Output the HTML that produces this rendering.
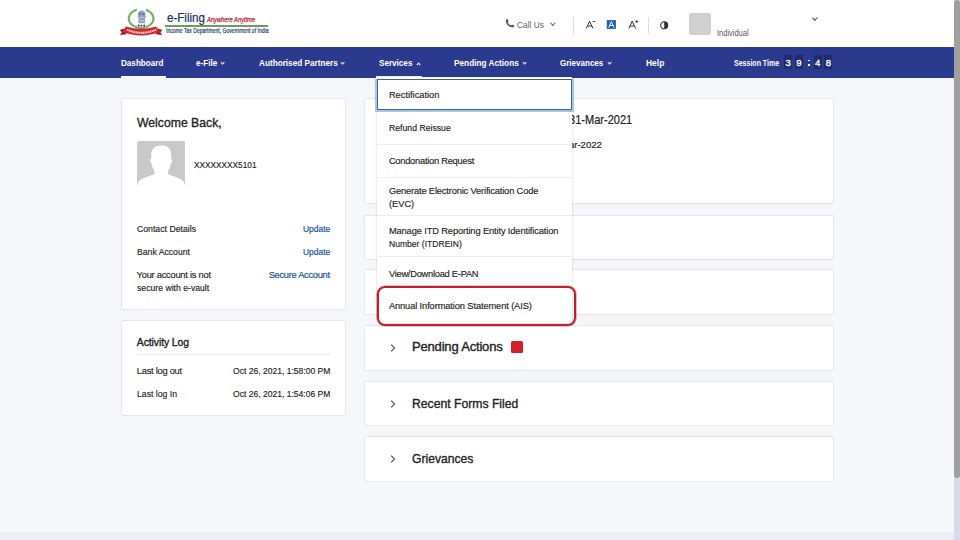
<!DOCTYPE html>
<html><head><meta charset="utf-8">
<style>
*{margin:0;padding:0;box-sizing:border-box}
html,body{width:960px;height:540px;overflow:hidden;background:#f4f6fa;font-family:"Liberation Sans",sans-serif;color:#222}
.abs{position:absolute}
.t{position:absolute;white-space:nowrap;line-height:1;transform-origin:0 0}
#hdr{position:absolute;left:0;top:0;width:954px;height:46.5px;background:#fff}
#nav{position:absolute;left:0;top:46.5px;width:954px;height:31px;background:#2a3b8f}
.chev{position:absolute;width:3.2px;height:3.2px;border-right:1px solid #fff;border-bottom:1px solid #fff;transform:rotate(45deg)}
.rchev{position:absolute;width:4.4px;height:4.4px;border-right:1.1px solid #555;border-bottom:1.1px solid #555;transform:rotate(-45deg)}
.card{position:absolute;background:#fff;border:1px solid #e6e7ee;border-radius:2px}
.dd{position:absolute;left:376.5px;top:77px;width:195.5px;height:246px;background:#fff;box-shadow:0 0 2px rgba(0,0,0,.2)}
.sep{position:absolute;left:376.5px;width:195.5px;height:1px;background:#eceef3}
.digit{position:absolute;top:55px;height:14px;background:#1f2c6e}
</style></head><body>
<div id="hdr"></div>
<!-- logo -->
<svg class="abs" style="left:118px;top:4px" width="50" height="36" viewBox="0 0 50 36">
  <ellipse cx="23.1" cy="14.45" rx="12.4" ry="9.4" fill="none" stroke="#7dbe7b" stroke-width="2.2"/>
  <ellipse cx="23.1" cy="14.45" rx="12.4" ry="9.4" fill="none" stroke="#46994d" stroke-width="0.9" stroke-dasharray="1.4 1.3"/>
  <rect x="18.8" y="3" width="9" height="4.5" fill="#fff"/>
  <path d="M20 10 C20 7.2 21.8 6.5 23.7 6.5 C25.6 6.5 27.5 7.2 27.5 10 L27.7 13.5 L26.8 14.2 L27.2 19.3 L20.2 19.3 L20.6 14.2 L19.7 13.5 Z" fill="#93a2c3"/>
  <circle cx="22.2" cy="10" r="1.1" fill="#63759f"/><circle cx="25.4" cy="10.2" r="1.1" fill="#63759f"/>
  <path d="M21.2 13.3 h5 M21.6 16.8 h4.2" stroke="#c3cce0" stroke-width="0.9"/>
  <path d="M20 21.5 h7.4" stroke="#2a2a2a" stroke-width="1.3" stroke-dasharray="1.7 1"/>
  <path d="M6 24.5 L1.8 26 L3.8 28.3 L2 30.9 L8.5 30.2 Z M40.2 24.5 L44.4 26 L42.4 28.3 L44.2 30.9 L37.7 30.2 Z" fill="#9e1b27"/>
  <path d="M8 22.4 Q23.1 27.2 38.2 22.4 L41.8 27.8 Q23.1 35.4 4.4 27.8 Z" fill="#d6232f"/>
  <path d="M9 25.6 Q23.4 32 38.3 25.6" fill="none" stroke="#fbe3e5" stroke-width="2" stroke-dasharray="1.3 0.5"/>
</svg>
<div class="abs" style="left:165.2px;top:25.2px;width:103.3px;height:1.8px;background:#6b9e5f"></div>

<!-- header right -->
<svg class="abs" style="left:505px;top:19px" width="10" height="9" viewBox="0 0 10 9"><path d="M1.2 0.6 L2.8 0.3 L3.6 2.4 L2.6 3.2 Q3.8 5.6 6.2 6.6 L7 5.6 L9.2 6.4 L9 8.2 Q4.8 8.6 2.2 5.6 Q0.4 3.4 1.2 0.6z" fill="#555"/></svg>
<div class="abs" style="left:550.8px;top:20.8px;width:3.6px;height:3.6px;border-right:1px solid #666;border-bottom:1px solid #666;transform:rotate(45deg)"></div>
<div class="abs" style="left:573.3px;top:17px;width:1px;height:17.5px;background:#dedede"></div>
<svg class="abs" style="left:585px;top:19px" width="60" height="12" viewBox="0 0 60 12">
  <path d="M1.2 9.5 L4.6 2.2 L8 9.5 M2.4 7 L6.8 7" fill="none" stroke="#333" stroke-width="1"/>
  <path d="M7.8 2.5 h2.4" stroke="#333" stroke-width="0.9"/>
  <rect x="21.8" y="1.1" width="9.1" height="8.8" fill="#1b60b6"/>
  <path d="M23.6 8.6 L26.35 2.6 L29.1 8.6 M24.6 6.5 L28.1 6.5" fill="none" stroke="#fff" stroke-width="0.95"/>
  <path d="M43.8 9.5 L47.2 2.2 L50.6 9.5 M45 7 L49.4 7" fill="none" stroke="#333" stroke-width="1"/>
  <path d="M50.3 2.6 h3 M51.8 1.1 v3" stroke="#333" stroke-width="0.9"/>
</svg>
<div class="abs" style="left:648.3px;top:17.2px;width:1px;height:17.2px;background:#dedede"></div>
<svg class="abs" style="left:659.5px;top:20.5px" width="9" height="9" viewBox="0 0 9 9"><circle cx="4.2" cy="4.3" r="3.5" fill="none" stroke="#333" stroke-width="1.1"/><path d="M4.2 0.8 A3.5 3.5 0 0 1 4.2 7.8z" fill="#333"/></svg>
<div class="abs" style="left:688.7px;top:12.5px;width:22.2px;height:22.2px;background:#d0d0d0;border-radius:2px"></div>
<div class="abs" style="left:813px;top:15.6px;width:3.8px;height:3.8px;border-right:1px solid #444;border-bottom:1px solid #444;transform:rotate(45deg)"></div>

<!-- nav -->
<div id="nav"></div>
<div class="abs" style="left:121px;top:75.5px;width:44.5px;height:2px;background:#f8f9fc"></div>
<div class="chev" style="left:221.2px;top:60.8px"></div>
<div class="chev" style="left:341.2px;top:60.8px"></div>
<div class="chev" style="left:417.2px;top:62.8px;transform:rotate(225deg)"></div>
<div class="abs" style="left:376px;top:75.5px;width:46px;height:2px;background:#f8f9fc"></div>
<div class="chev" style="left:522.8px;top:60.8px"></div>
<div class="chev" style="left:607.8px;top:60.8px"></div>
<div class="digit" style="left:784.4px;width:7.6px"></div>
<div class="digit" style="left:795px;width:8.1px"></div>
<div class="digit" style="left:813.7px;width:8.2px"></div>
<div class="digit" style="left:824.4px;width:8.1px"></div>
<div class="abs" style="left:808px;top:59.5px;width:1.6px;height:1.6px;background:#fff"></div>
<div class="abs" style="left:808px;top:64px;width:1.6px;height:1.6px;background:#fff"></div>

<!-- cards -->
<div class="card" style="left:121px;top:98px;width:225px;height:212px"></div>
<svg class="abs" style="left:136.7px;top:140.7px" width="48.2" height="47.2" viewBox="0 0 48.2 47.2">
  <rect width="48.2" height="47.2" rx="2" fill="#c9c9c9"/>
  <path d="M24.6 4.6 C30.8 4.6 34.2 8 34.2 13.5 L34.2 17.5 C35.4 17.8 35.4 21.5 33.9 22.5 C33.1 26 32.1 28.5 31.1 29.5 L31.1 33 C36 35.5 44 37 46.5 40.5 C47.6 42 48.2 44.5 48.2 47.2 L0 47.2 C0 44.5 0.6 42 1.7 40.5 C4.2 37 12.2 35.5 17.3 33 L17.3 29.5 C16.3 28.5 15.3 26 14.5 22.5 C13 21.5 13 17.8 14.3 17.5 L14.3 13.5 C14.3 8 17.8 4.6 24.6 4.6 Z" fill="#fff"/>
</svg>
<div class="card" style="left:121px;top:320px;width:225px;height:96px"></div>
<div class="abs" style="left:136.8px;top:354px;width:193.5px;height:1px;background:#e6e7ec"></div>

<div class="card" style="left:364px;top:98px;width:470px;height:106px"></div>
<div class="card" style="left:364px;top:214.5px;width:470px;height:45.5px"></div>
<div class="card" style="left:364px;top:269.2px;width:470px;height:45.5px"></div>
<div class="card" style="left:364px;top:325.3px;width:470px;height:45.5px"></div>
<div class="card" style="left:364px;top:381.2px;width:470px;height:45.3px"></div>
<div class="card" style="left:364px;top:436.4px;width:470px;height:45.6px"></div>

<div class="abs" style="left:510.5px;top:340.5px;width:12.5px;height:12px;background:#d3202b;border-radius:1.5px"></div>



<svg class="abs" style="left:389px;top:342.6px" width="8" height="10" viewBox="0 0 8 10"><path d="M2.1 1.6 L5.6 5 L2.1 8.4" fill="none" stroke="#555" stroke-width="1.15"/></svg>
<svg class="abs" style="left:389px;top:398.6px" width="8" height="10" viewBox="0 0 8 10"><path d="M2.1 1.6 L5.6 5 L2.1 8.4" fill="none" stroke="#555" stroke-width="1.15"/></svg>
<svg class="abs" style="left:389px;top:453.6px" width="8" height="10" viewBox="0 0 8 10"><path d="M2.1 1.6 L5.6 5 L2.1 8.4" fill="none" stroke="#555" stroke-width="1.15"/></svg>
<div class="t" style="left:166.80px;top:11px;font-size:13.2px;color:#14305f;transform:scaleX(0.8780);-webkit-text-stroke:0.2px #14305f">e-Filing</div>
<div class="t" style="left:207.20px;top:16px;font-size:7.4px;color:#b5202f;font-style:italic;transform:scaleX(0.7815);-webkit-text-stroke:0.25px #b5202f">Anywhere Anytime</div>
<div class="t" style="left:165.50px;top:28px;font-size:6.5px;color:#284568;transform:scaleX(0.7801);-webkit-text-stroke:0.2px #284568">Income Tax Department, Government of India</div>
<div class="t" style="left:517.00px;top:20px;font-size:9.8px;color:#666;transform:scaleX(0.8549)">Call Us</div>
<div class="t" style="left:716.70px;top:29px;font-size:8.6px;color:#555;transform:scaleX(0.8697)">Individual</div>
<div class="t" style="left:120.80px;top:58px;font-size:9.8px;color:#fff;font-weight:bold;transform:scaleX(0.8283)">Dashboard</div>
<div class="t" style="left:195.60px;top:58px;font-size:9.8px;color:#fff;font-weight:bold;transform:scaleX(0.8322)">e-File</div>
<div class="t" style="left:259.00px;top:58px;font-size:9.8px;color:#fff;font-weight:bold;transform:scaleX(0.8354)">Authorised Partners</div>
<div class="t" style="left:379.30px;top:58px;font-size:9.8px;color:#fff;font-weight:bold;transform:scaleX(0.8283)">Services</div>
<div class="t" style="left:454.00px;top:58px;font-size:9.8px;color:#fff;font-weight:bold;transform:scaleX(0.8421)">Pending Actions</div>
<div class="t" style="left:560.40px;top:58px;font-size:9.8px;color:#fff;font-weight:bold;transform:scaleX(0.8193)">Grievances</div>
<div class="t" style="left:645.70px;top:58px;font-size:9.8px;color:#fff;font-weight:bold;transform:scaleX(0.8617)">Help</div>
<div class="t" style="left:733.50px;top:60px;font-size:8.2px;color:#fff;font-weight:bold;transform:scaleX(0.8574)">Session Time</div>
<div class="t" style="left:785.40px;top:58px;font-size:9.5px;color:#fff;-webkit-text-stroke:0.35px #fff">3</div>
<div class="t" style="left:796.30px;top:58px;font-size:9.5px;color:#fff;-webkit-text-stroke:0.35px #fff">9</div>
<div class="t" style="left:815.10px;top:58px;font-size:9.5px;color:#fff;-webkit-text-stroke:0.35px #fff">4</div>
<div class="t" style="left:825.70px;top:58px;font-size:9.5px;color:#fff;-webkit-text-stroke:0.35px #fff">8</div>
<div class="t" style="left:137.00px;top:116px;font-size:13.3px;color:#222;transform:scaleX(0.9192);-webkit-text-stroke:0.35px #222">Welcome Back,</div>
<div class="t" style="left:194.10px;top:160px;font-size:9.7px;color:#222;transform:scaleX(0.8536);-webkit-text-stroke:0.15px #222">XXXXXXXX5101</div>
<div class="t" style="left:136.60px;top:225px;font-size:9.3px;color:#222;transform:scaleX(0.9356);-webkit-text-stroke:0.15px #222">Contact Details</div>
<div class="t" style="left:136.60px;top:248px;font-size:9.3px;color:#222;transform:scaleX(0.9319);-webkit-text-stroke:0.15px #222">Bank Account</div>
<div class="t" style="left:136.60px;top:271px;font-size:9.3px;color:#222;letter-spacing:-0.242px;-webkit-text-stroke:0.15px #222">Your account is not</div>
<div class="t" style="left:136.60px;top:284px;font-size:9.3px;color:#222;transform:scaleX(0.9312);-webkit-text-stroke:0.15px #222">secure with e-vault</div>
<div class="t" style="left:302.70px;top:225px;font-size:9.3px;color:#1b5299;transform:scaleX(0.9103);-webkit-text-stroke:0.2px #1b5299">Update</div>
<div class="t" style="left:302.70px;top:248px;font-size:9.3px;color:#1b5299;transform:scaleX(0.9103);-webkit-text-stroke:0.2px #1b5299">Update</div>
<div class="t" style="left:268.70px;top:271px;font-size:9.3px;color:#1b5299;letter-spacing:-0.295px;-webkit-text-stroke:0.2px #1b5299">Secure Account</div>
<div class="t" style="left:136.80px;top:338px;font-size:10.4px;color:#222;letter-spacing:-0.080px;-webkit-text-stroke:0.35px #222">Activity Log</div>
<div class="t" style="left:136.80px;top:367px;font-size:9.3px;color:#222;letter-spacing:-0.253px;-webkit-text-stroke:0.15px #222">Last log out</div>
<div class="t" style="left:233.20px;top:367px;font-size:9.3px;color:#222;transform:scaleX(0.9190);-webkit-text-stroke:0.15px #222">Oct 26, 2021, 1:58:00 PM</div>
<div class="t" style="left:136.80px;top:390px;font-size:9.3px;color:#222;transform:scaleX(0.9344);-webkit-text-stroke:0.15px #222">Last log In</div>
<div class="t" style="left:233.20px;top:390px;font-size:9.3px;color:#222;transform:scaleX(0.9190);-webkit-text-stroke:0.15px #222">Oct 26, 2021, 1:54:06 PM</div>
<div class="t" style="left:569.30px;top:114px;font-size:12.2px;color:#222;transform:scaleX(0.9060);-webkit-text-stroke:0.2px #222">31-Mar-2021</div>
<div class="t" style="left:568.90px;top:140px;font-size:9.6px;color:#222;-webkit-text-stroke:0.15px #222">ar-2022</div>
<div class="t" style="left:412.00px;top:340px;font-size:13.0px;color:#222;letter-spacing:-0.181px;-webkit-text-stroke:0.35px #222">Pending Actions</div>
<div class="t" style="left:412.00px;top:397px;font-size:13.0px;color:#222;transform:scaleX(0.9372);-webkit-text-stroke:0.35px #222">Recent Forms Filed</div>
<div class="t" style="left:412.00px;top:452px;font-size:13.0px;color:#222;transform:scaleX(0.9323);-webkit-text-stroke:0.35px #222">Grievances</div>

<!-- dropdown -->
<div class="dd"></div>
<div class="sep" style="top:144.0px"></div>
<div class="sep" style="top:176.6px"></div>
<div class="sep" style="top:215.4px"></div>
<div class="sep" style="top:256.1px"></div>
<div class="abs" style="left:375.4px;top:79px;width:198.2px;height:32.8px;background:#a9c5e4"></div>
<div class="abs" style="left:377px;top:78.5px;width:195px;height:31.7px;background:#fff;border:1.2px solid #41639a"></div>
<div class="t" style="left:388.90px;top:91px;font-size:9.3px;color:#222;letter-spacing:-0.013px;-webkit-text-stroke:0.15px #222">Rectification</div>
<div class="t" style="left:388.90px;top:124px;font-size:9.3px;color:#222;transform:scaleX(0.9339);-webkit-text-stroke:0.15px #222">Refund Reissue</div>
<div class="t" style="left:388.90px;top:157px;font-size:9.3px;color:#222;letter-spacing:-0.248px;-webkit-text-stroke:0.15px #222">Condonation Request</div>
<div class="t" style="left:388.90px;top:187px;font-size:9.3px;color:#222;letter-spacing:-0.155px;-webkit-text-stroke:0.15px #222">Generate Electronic Verification Code</div>
<div class="t" style="left:388.90px;top:200px;font-size:9.3px;color:#222;-webkit-text-stroke:0.15px #222">(EVC)</div>
<div class="t" style="left:388.90px;top:227px;font-size:9.3px;color:#222;letter-spacing:-0.125px;-webkit-text-stroke:0.15px #222">Manage ITD Reporting Entity Identification</div>
<div class="t" style="left:388.90px;top:240px;font-size:9.3px;color:#222;transform:scaleX(0.9209);-webkit-text-stroke:0.15px #222">Number (ITDREIN)</div>
<div class="t" style="left:388.90px;top:270px;font-size:9.3px;color:#222;letter-spacing:-0.253px;-webkit-text-stroke:0.15px #222">View/Download E-PAN</div>
<div class="t" style="left:388.90px;top:302px;font-size:9.3px;color:#222;letter-spacing:-0.115px;-webkit-text-stroke:0.15px #222">Annual Information Statement (AIS)</div>
<div class="abs" style="left:377px;top:286.2px;width:198.8px;height:40.2px;border:2px solid #bf1e2c;border-radius:8px;box-shadow:0 0 0 0.6px rgba(191,30,44,.55)"></div>

<!-- footer band & scrollbar -->
<div class="abs" style="left:0;top:531.8px;width:954px;height:9px;background:#ecedf5"></div>
<div class="abs" style="left:954px;top:0;width:6px;height:540px;background:#d9dae9"></div>
<div class="abs" style="left:954px;top:0;width:6px;height:477.5px;background:#9f9fa0;border-radius:3px"></div>
</body></html>
